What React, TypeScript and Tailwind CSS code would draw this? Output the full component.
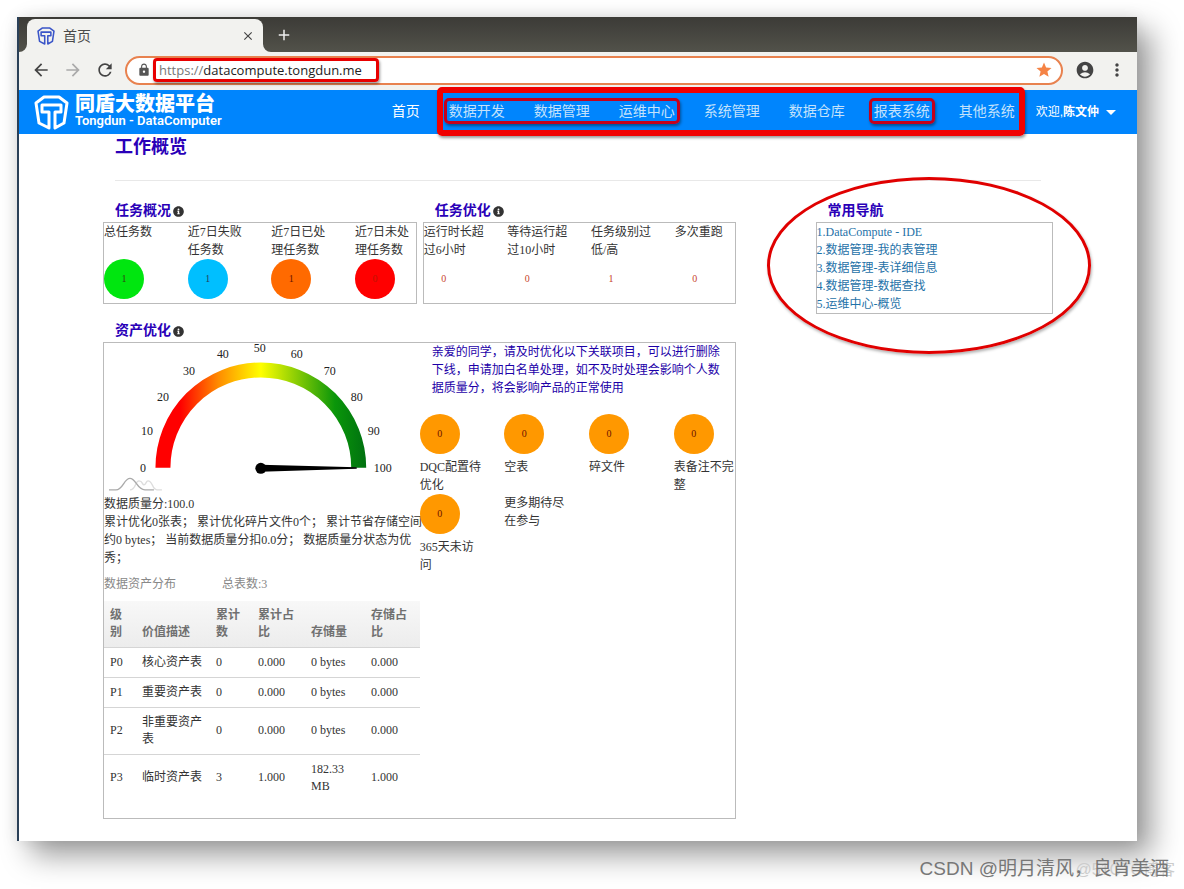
import {
  MdAccountCircle,
  MdAdd,
  MdArrowBack,
  MdArrowDropDown,
  MdArrowForward,
  MdClose,
  MdLock,
  MdMoreVert,
  MdRefresh,
  MdStar,
} from 'react-icons/md';
import { FaInfoCircle } from 'react-icons/fa';

const stateTasks = [
  { name: '总任务数', count: 1, circle: 'bg-[#00e60f]', text: 'text-[#2c4a10]' },
  { name: '近7日失败任务数', count: 1, circle: 'bg-[#00bfff]', text: 'text-[#24405c]' },
  { name: '近7日已处理任务数', count: 1, circle: 'bg-[#ff6a00]', text: 'text-[#6b1200]' },
  { name: '近7日未处理任务数', count: 0, circle: 'bg-[#ff0000]', text: 'text-[#c01400]' },
];

const optimizeTasks = [
  { name: '运行时长超过6小时', count: 0 },
  { name: '等待运行超过10小时', count: 0 },
  { name: '任务级别过低/高', count: 1 },
  { name: '多次重跑', count: 0 },
];

const assets = ['DQC配置待优化', '空表', '碎文件', '表备注不完整', '365天未访问'];

const rows = [
  ['P0', '核心资产表', '0', '0.000', '0 bytes', '0.000'],
  ['P1', '重要资产表', '0', '0.000', '0 bytes', '0.000'],
  ['P2', '非重要资产表', '0', '0.000', '0 bytes', '0.000'],
  ['P3', '临时资产表', '3', '1.000', '182.33 MB', '1.000'],
];

const shortcuts = [
  '1.DataCompute - IDE',
  '2.数据管理-我的表管理',
  '3.数据管理-表详细信息',
  '4.数据管理-数据查找',
  '5.运维中心-概览',
];

const ticks = [
  [39, 125],
  [43, 88],
  [59, 54],
  [85, 28],
  [119, 11],
  [156, 5],
  [193, 11],
  [226, 28],
  [253, 54],
  [270, 88],
  [279, 125],
];

function Logo({ className }: { className: string }) {
  return (
    <svg viewBox="0 0 35 35" className={className} fill="none" stroke="currentColor" strokeWidth="3" aria-hidden="true">
      <path d="M15 33 L5 28 L2 8 L10 2 H25 L33 8 L30 28 L21 33 V17 H27 V10 H8 V17 H15 Z" strokeLinejoin="round" />
    </svg>
  );
}

function TabFoot({ flip = false }: { flip?: boolean }) {
  return (
    <svg viewBox="0 0 8 8" className={flip ? 'h-2 w-2 -scale-x-100' : 'h-2 w-2'} aria-hidden="true">
      <path d="M8 0 V8 H0 A8 8 0 0 0 8 0 Z" fill="#f2f2ef" />
    </svg>
  );
}

function SectionTitle({ title, info = true }: { title: string; info?: boolean }) {
  return (
    <h2 className="ml-3 flex h-[22px] items-center gap-[2px] text-[14px] font-bold text-[#2a00b8]">
      {title}
      {info && <FaInfoCircle className="h-[11px] w-[11px] text-[#333]" />}
    </h2>
  );
}

function BrowserBar() {
  return (
    <header className="font-['Open_Sans','Noto_Sans_CJK_SC',sans-serif]">
      <div className="flex h-[35px] items-end bg-gradient-to-b from-[#3c3b37] to-[#52524a]">
        <TabFoot />
        <div className="flex h-[33px] w-[236px] items-center rounded-t-lg bg-[#f2f2ef] pr-2 pl-[10px]">
          <Logo className="h-[18px] w-[18px] text-[#3a55c8]" />
          <span className="ml-2 grow text-[14px] text-[#4a4a4a]">首页</span>
          <button type="button" aria-label="关闭标签页">
            <MdClose className="h-[14px] w-[14px] text-[#444]" />
          </button>
        </div>
        <TabFoot flip />
        <button type="button" aria-label="新标签页" className="mb-2 ml-1">
          <MdAdd className="h-[18px] w-[18px] text-[#eee]" />
        </button>
      </div>
      <div className="flex h-[38px] items-center bg-[#f2f2ef] pr-[10px] pb-[2px] pl-3 text-[#444]">
        <button type="button" aria-label="后退">
          <MdArrowBack className="h-5 w-5" />
        </button>
        <button type="button" aria-label="前进" className="ml-3">
          <MdArrowForward className="h-5 w-5 text-[#aaa]" />
        </button>
        <button type="button" aria-label="刷新" className="ml-3">
          <MdRefresh className="h-5 w-5" />
        </button>
        <div className="ml-[10px] flex h-[29px] grow items-center rounded-full border-2 border-[#e8824f] bg-white pr-2 pl-[10px]">
          <MdLock className="h-[14px] w-[14px] shrink-0 text-[#555]" />
          <label className="relative ml-2 flex w-[214px] text-[13px]">
            <span className="text-[#777]">https://</span>
            <input
              type="text"
              aria-label="地址"
              defaultValue="datacompute.tongdun.me"
              className="w-0 min-w-0 grow text-[#222] outline-none"
            />
            <span className="pointer-events-none absolute -inset-x-[6px] -inset-y-[3px] rounded-[4px] border-[3px] border-[#e80000] shadow-[1px_2px_3px_rgba(0,0,0,0.4)]" />
          </label>
          <MdStar className="ml-auto h-[18px] w-[18px] text-[#f58345]" />
        </div>
        <button type="button" aria-label="帐号" className="ml-3">
          <MdAccountCircle className="h-5 w-5" />
        </button>
        <button type="button" aria-label="菜单" className="ml-3">
          <MdMoreVert className="h-5 w-5" />
        </button>
      </div>
    </header>
  );
}

function NavBar() {
  return (
    <nav className="flex h-11 items-center bg-[#0085fd] pr-[14px] pl-[15px] font-['Liberation_Sans','Noto_Sans_CJK_SC',sans-serif] text-white">
      <Logo className="h-[35px] w-[35px] shrink-0" />
      <div className="ml-[6px] shrink-0 pb-1">
        <p className="text-[20px] leading-[20px] font-black">同盾大数据平台</p>
        <p className="font-['Roboto'] text-[13px] leading-[13px] font-semibold">Tongdun - DataComputer</p>
      </div>
      <div className="ml-auto flex h-full items-center gap-[29px] pb-[2px] text-[14px]">
        <a href="#home">首页</a>
        <div className="relative flex h-full items-center gap-[29px] text-[#c4e2fb]">
          <div className="relative flex h-[18px] items-center gap-[29px]">
            <a href="#dev">数据开发</a>
            <a href="#data">数据管理</a>
            <a href="#ops">运维中心</a>
            <span className="pointer-events-none absolute -inset-x-[5px] -inset-y-1 rounded-[5px] border-[3px] border-[#c4001c] shadow-[1px_2px_3px_rgba(0,0,0,0.4)]" />
          </div>
          <a href="#system">系统管理</a>
          <a href="#warehouse">数据仓库</a>
          <div className="relative flex h-[18px] items-center">
            <a href="#report">报表系统</a>
            <span className="pointer-events-none absolute -inset-x-[5px] -inset-y-1 rounded-[5px] border-[3px] border-[#c4001c] shadow-[1px_2px_3px_rgba(0,0,0,0.4)]" />
          </div>
          <a href="#others">其他系统</a>
          <span className="pointer-events-none absolute -top-[3px] -right-[10px] -bottom-1 -left-3 rounded-[5px] border-[6px] border-[#f00000] shadow-[1px_2px_3px_rgba(0,0,0,0.4)]" />
        </div>
      </div>
      <button type="button" className="ml-[21px] flex items-center text-[12px]">
        欢迎,<b>陈文仲</b>
        <MdArrowDropDown className="h-6 w-6" />
      </button>
    </nav>
  );
}

function Gauge() {
  return (
    <svg viewBox="0 0 316 152" className="block w-full overflow-visible" role="img" aria-label="数据质量分">
      <defs>
        <linearGradient id="score" gradientUnits="userSpaceOnUse" x1="51" y1="0" x2="263" y2="0">
          <stop offset="0.12" stopColor="#ff0000" />
          <stop offset="0.3" stopColor="#ff8c00" />
          <stop offset="0.5" stopColor="#ffff00" />
          <stop offset="0.85" stopColor="#0a960a" />
          <stop offset="1" stopColor="#007010" />
        </linearGradient>
      </defs>
      <path d="M59 125 A98 98 0 0 1 255 125" fill="none" stroke="url(#score)" strokeWidth="15" />
      <path d="M157 122 L253 124.5 V126 L157 129 Z" />
      <circle cx="157" cy="125.5" r="5.5" />
      {ticks.map(([x, y], i) => (
        <text key={i} x={x} y={y + 4} textAnchor="middle" fontSize="12" fill="#222">
          {i * 10}
        </text>
      ))}
      <g fill="none" strokeWidth="1.4">
        <path d="M26 147 C32 147 31 138 35 138 S38 142 40 142 S42 138 44 138 C49 138 48 147 53 147 H58" stroke="#ddd" />
        <path d="M5 147 H12 C19 147 20 135.500 26 135.500 S33 147 41 147 H50" stroke="#aaa" />
      </g>
    </svg>
  );
}

function AssetTable() {
  return (
    <table className="mt-2 w-full table-fixed text-left leading-[17px]">
      <colgroup>
        <col className="w-[32px]" />
        <col className="w-[74px]" />
        <col className="w-[42px]" />
        <col className="w-[53px]" />
        <col className="w-[60px]" />
        <col />
      </colgroup>
      <thead className="bg-gradient-to-b from-[#f8f8f8] to-[#ececec] align-bottom text-[#707070]">
        <tr className="border-b border-[#d5d5d5]">
          {['级别', '价值描述', '累计数', '累计占比', '存储量', '存储占比'].map((name) => (
            <th key={name} className="p-[6px] font-bold">
              {name}
            </th>
          ))}
        </tr>
      </thead>
      <tbody>
        {rows.map((row) => (
          <tr key={row[0]} className="border-b border-[#d5d5d5] last:border-b-0">
            {row.map((cell, i) => (
              <td key={i} className="p-[6px]">
                {cell}
              </td>
            ))}
          </tr>
        ))}
      </tbody>
    </table>
  );
}

export default function App() {
  return (
    <div className="relative min-h-screen bg-white pt-[17px] pr-[47px] pb-12 pl-[17px] font-['Liberation_Serif','Noto_Sans_CJK_SC',serif] text-[12px] leading-[18px] text-[#333]">
      <div className="border-l-2 border-[#2a4058] bg-white shadow-[14px_14px_28px_rgba(0,0,0,0.4),0_0_14px_rgba(0,0,0,0.08)]">
        <BrowserBar />
        <NavBar />
        <main className="px-[84px] pb-[22px]">
          <h1 className="mx-3 border-b border-[#e8e8e8] pt-px pb-[21px] text-[18px] leading-6 font-bold text-[#2a00b8]">
            工作概览
          </h1>
          <div className="mt-[19px] flex items-start justify-between">
            <div className="w-2/3">
              <div className="grid grid-cols-2 gap-[6px]">
                <section>
                  <SectionTitle title="任务概况" />
                  <div className="grid grid-cols-4 gap-x-[23px] border border-[#bbb] pb-1">
                    {stateTasks.map((task) => (
                      <div key={task.name}>
                        <p className="h-9">{task.name}</p>
                        <div className={`flex h-10 w-10 items-center justify-center rounded-full text-[10px] ${task.circle} ${task.text}`}>
                          {task.count}
                        </div>
                      </div>
                    ))}
                  </div>
                </section>
                <section>
                  <SectionTitle title="任务优化" />
                  <div className="grid grid-cols-4 gap-x-[23px] border border-[#bbb] pb-1">
                    {optimizeTasks.map((task) => (
                      <div key={task.name}>
                        <p className="h-9">{task.name}</p>
                        <div className="flex h-10 w-10 items-center justify-center text-[10px] text-[#c8452c]">{task.count}</div>
                      </div>
                    ))}
                  </div>
                </section>
              </div>
              <section className="mt-4">
                <SectionTitle title="资产优化" />
                <div className="grid grid-cols-2 border border-[#bbb] pb-[17px]">
                  <div>
                    <Gauge />
                    <p>数据质量分:100.0</p>
                    <p className="whitespace-nowrap">
                      累计优化0张表； 累计优化碎片文件0个； 累计节省存储空间
                      <br />
                      约0 bytes； 当前数据质量分扣0.0分； 数据质量分状态为优
                      <br />
                      秀；
                    </p>
                    <p className="mt-2 flex text-[#888]">
                      <span className="w-[118px]">数据资产分布</span>
                      <span>总表数:3</span>
                    </p>
                    <AssetTable />
                  </div>
                  <div>
                    <p className="pr-[14px] pl-3 text-[#1c00a8]">
                      亲爱的同学，请及时优化以下关联项目，可以进行删除下线，申请加白名单处理，如不及时处理会影响个人数据质量分，将会影响产品的正常使用
                    </p>
                    <div className="mt-[17px] grid grid-cols-4 gap-x-[23px]">
                      {assets.map((name) => (
                        <div key={name}>
                          <div className="flex h-10 w-10 items-center justify-center rounded-full bg-[#ff9800] text-[10px] text-[#6b1200]">0</div>
                          <p className="mt-1 h-9">{name}</p>
                        </div>
                      ))}
                      <p>更多期待尽在参与</p>
                    </div>
                  </div>
                </div>
              </section>
            </div>
            <aside className="relative w-1/4">
              <SectionTitle title="常用导航" info={false} />
              <ul className="border border-[#bbb]">
                {shortcuts.map((name) => (
                  <li key={name}>
                    <a href="#shortcut" className="text-[#1f72a8]">
                      {name}
                    </a>
                  </li>
                ))}
              </ul>
              <span className="pointer-events-none absolute -top-[23px] -right-[38px] -bottom-10 -left-[49px] rounded-[50%] border-[3px] border-[#e00000] shadow-[1px_2px_3px_rgba(0,0,0,0.3)]" />
            </aside>
          </div>
        </main>
      </div>
      <p className="absolute right-[9px] bottom-[7px] font-['Liberation_Sans','Noto_Sans_CJK_SC',sans-serif] text-[16px] leading-6 text-[#ccc]">
        @51CTO博客
      </p>
      <p className="absolute right-[15px] bottom-2 font-['Liberation_Sans','Noto_Sans_CJK_SC',sans-serif] text-[19px] leading-6 text-[#777]">
        CSDN @明月清风，良宵美酒
      </p>
    </div>
  );
}
